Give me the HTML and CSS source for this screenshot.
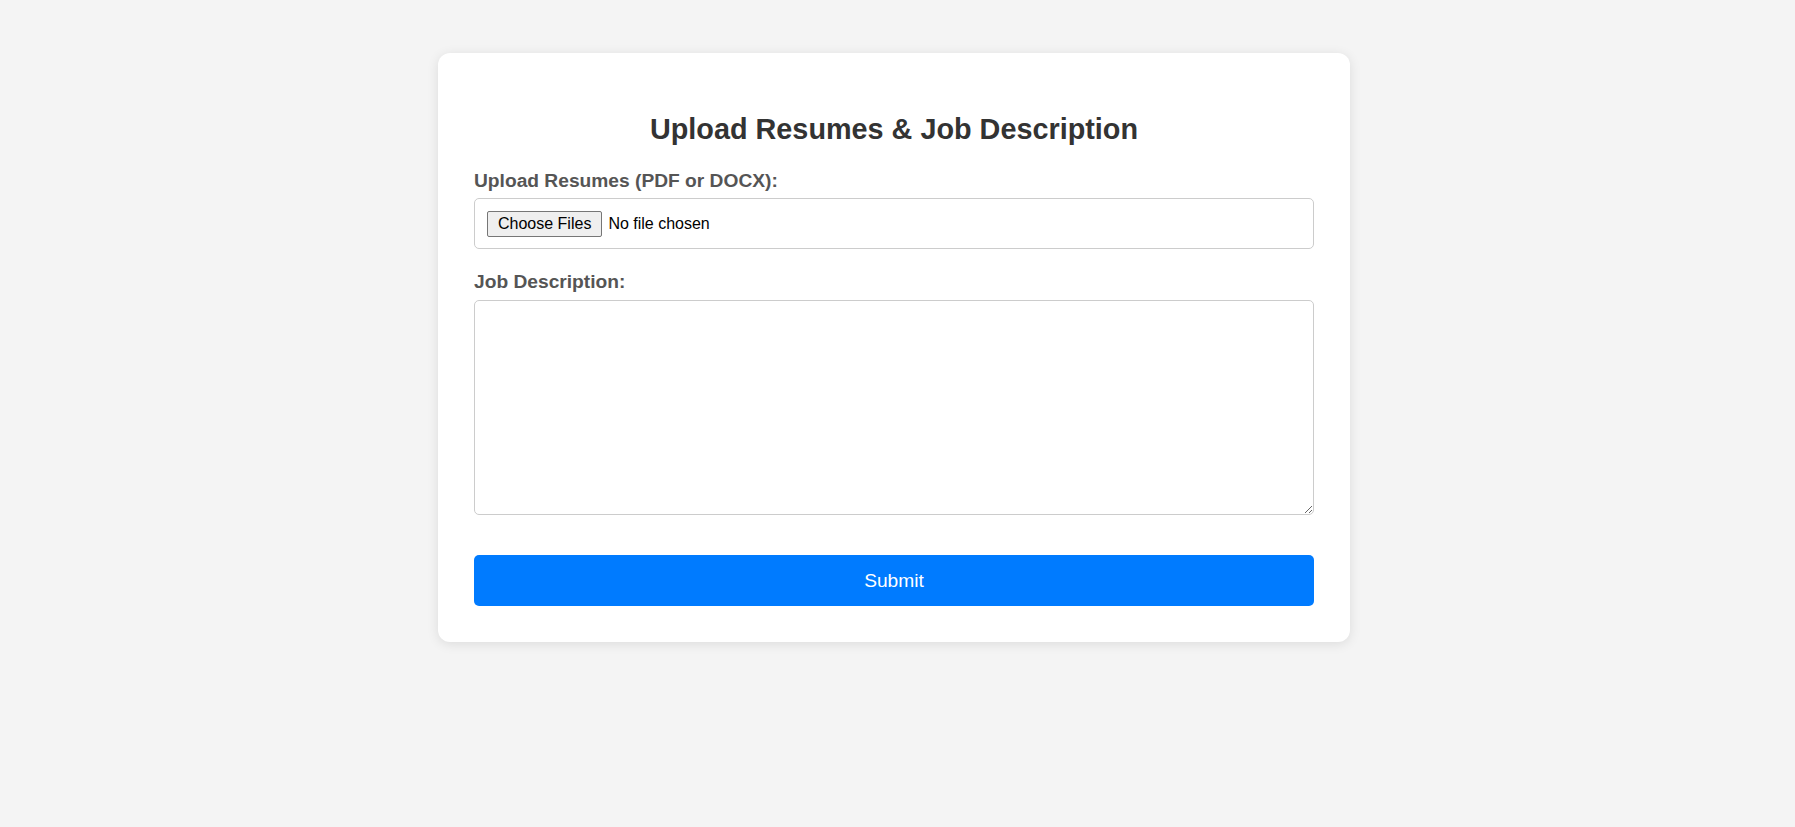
FILE: index.html
```html
<!DOCTYPE html>
<html lang="en">
<head>
<meta charset="utf-8">
<title>Upload Resumes &amp; Job Description</title>
<link rel="stylesheet" href="styles.css">
</head>
<body>
  <main class="card">
    <h2 class="title">Upload Resumes &amp; Job Description</h2>
    <form class="form">
      <label class="label" for="resumes">Upload Resumes (PDF or DOCX):</label>
      <input class="file" id="resumes" type="file" multiple>
      <label class="label label-second" for="jd">Job Description:</label>
      <textarea class="textarea" id="jd"></textarea>
      <button class="submit" type="button">Submit</button>
    </form>
  </main>
</body>
</html>
```

FILE: styles.css
```css
html, body {
  margin: 0;
  padding: 0;
}
body {
  background: #f4f4f4;
  font-family: "Liberation Sans", Arial, sans-serif;
  padding: 53px 7px 0 0;
  min-height: 827px;
  box-sizing: border-box;
}
.card {
  width: 912px;
  box-sizing: border-box;
  margin: 0 auto;
  background: #ffffff;
  border-radius: 12px;
  padding: 60px 36px 36px;
  box-shadow: 0 2px 12px rgba(0, 0, 0, 0.1);
}
.title {
  margin: 0 0 24px;
  text-align: center;
  font-size: 28.8px;
  line-height: 33px;
  font-weight: bold;
  color: #333333;
}
.form {
  display: flex;
  flex-direction: column;
}
.label {
  display: block;
  font-size: 19.2px;
  line-height: 22px;
  font-weight: bold;
  color: #555555;
  margin-bottom: 6px;
}
.label-second {
  margin-top: 22px;
  margin-bottom: 7px;
}
.file {
  box-sizing: border-box;
  width: 100%;
  height: 51px;
  padding: 12px;
  border: 1px solid #cccccc;
  border-radius: 5px;
  font-family: "Liberation Sans", Arial, sans-serif;
  font-size: 16px;
  color: #000000;
  background: #ffffff;
}
.file::file-selector-button {
  font-family: "Liberation Sans", Arial, sans-serif;
  font-size: 16px;
  line-height: 18px;
  padding: 3px 10px;
  margin-right: 6px;
  border: 1px solid #767676;
  border-radius: 2px;
  background: #efefef;
  color: #000000;
}
.textarea {
  box-sizing: border-box;
  width: 100%;
  height: 215px;
  padding: 12px;
  border: 1px solid #cccccc;
  border-radius: 5px;
  font-family: "Liberation Sans", Arial, sans-serif;
  font-size: 16px;
  display: block;
}
.submit {
  margin-top: 40px;
  height: 51px;
  width: 100%;
  border: none;
  border-radius: 5px;
  background: #007bff;
  color: #ffffff;
  font-family: "Liberation Sans", Arial, sans-serif;
  font-size: 19.2px;
  cursor: pointer;
}
```
